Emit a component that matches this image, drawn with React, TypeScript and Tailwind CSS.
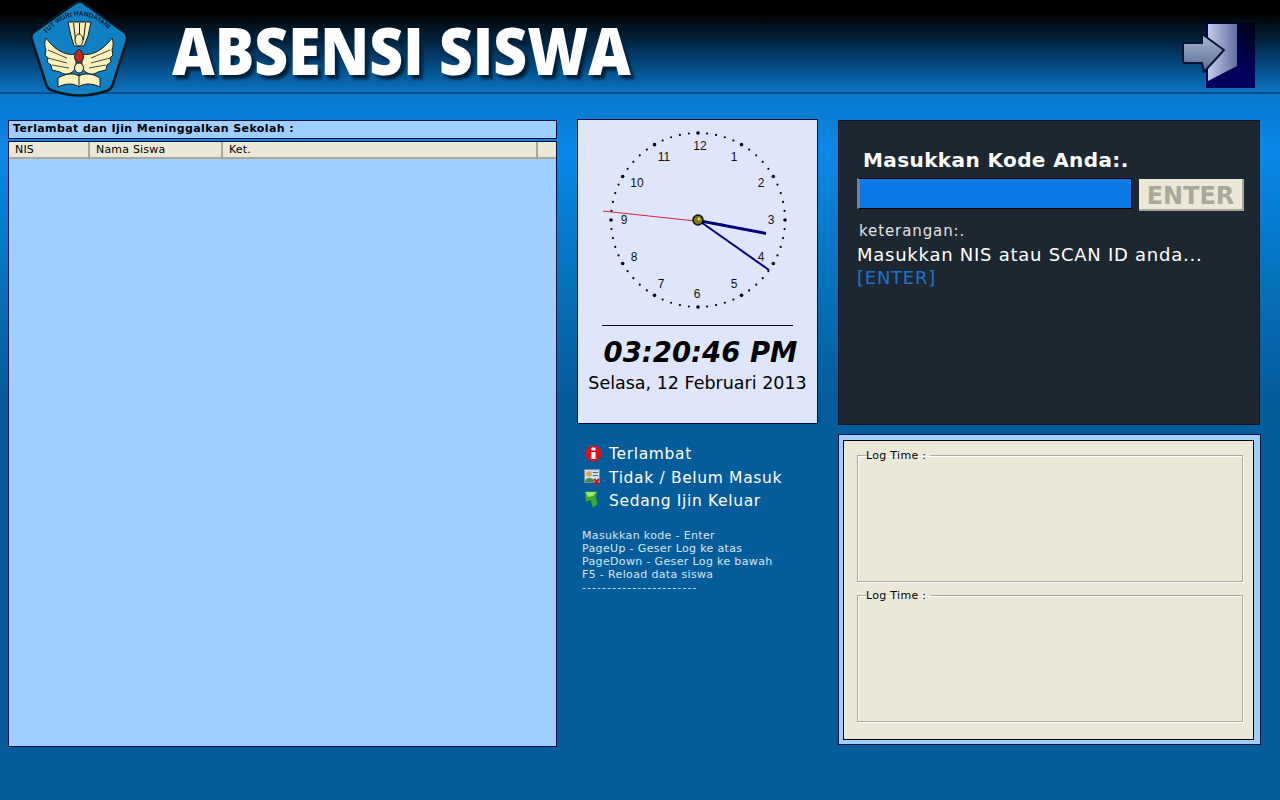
const verdana = "font-['DejaVu_Sans',sans-serif]";

function Logo() {
  return (
    <svg width="104" height="100" viewBox="28 0 104 100" className="absolute left-[28px] top-0">
      <defs>
        <path id="arc" d="M46 34 Q79 -3 113 34" fill="none" />
      </defs>
      <path d="M79 2 Q82 1 85 4 L124 32 Q128 35 127 40 L113 84 Q111 90 106 91 Q80 100 54 91 Q48 90 46 84 L32 40 Q30 35 34 32 L74 4 Q76 2 79 2Z" fill="#0f80c4" stroke="#10161c" strokeWidth="2.5" />
      <text fontSize="6.6" fontFamily="'Liberation Sans',sans-serif" fontWeight="700" fill="#0c2238"><textPath href="#arc" textLength="72">TUT WURI HANDAYANI</textPath></text>
      <path d="M68 22 L91 22 L88 36 L84 46 L74 46 L71 36Z" fill="#f8efb8" stroke="#1a1a1a" strokeWidth="1" />
      <path d="M73.5 23 L75.5 40 M79.5 23 L79.5 40 M85.5 23 L83.5 40" stroke="#1a1a1a" strokeWidth="1" />
      <path d="M46 38 C44 43 45 47 46 50 L45 55 L48 58 L47 62 L51 65 L52 70 L60 72 C66 76 72 74 76 68 L76 54 C68 56 56 52 46 38Z" fill="#fbf3bd" stroke="#1a1a1a" strokeWidth="1" />
      <path d="M112 38 C114 43 113 47 112 50 L113 55 L110 58 L111 62 L107 65 L106 70 L98 72 C92 76 86 74 82 68 L82 54 C90 56 102 52 112 38Z" fill="#fbf3bd" stroke="#1a1a1a" strokeWidth="1" />
      <path d="M48 50 L67 58 M48 58 L67 63 M52 65 L69 68 M110 50 L91 58 M110 58 L91 63 M106 65 L89 68" stroke="#1a1a1a" strokeWidth="0.8" />
      <ellipse cx="79" cy="40" rx="4" ry="6" fill="#f8efb8" stroke="#1a1a1a" />
      <path d="M79 49 C85 54 85 61 79 62.5 C73 61 73 54 79 49Z" fill="#c8281c" stroke="#1a1a1a" />
      <ellipse cx="79" cy="68" rx="4.5" ry="5" fill="#f8efb8" stroke="#1a1a1a" />
      <path d="M58 78 C66 73 74 73 79 76 C84 73 92 73 100 78 L100 87 C92 83 84 83 79 87 C74 83 66 83 58 87Z" fill="#fbf3bd" stroke="#1a1a1a" />
      <path d="M79 74 L79 87" stroke="#1a1a1a" />
    </svg>
  );
}

function ExitIcon() {
  return (
    <svg width="80" height="68" viewBox="1177 21 80 68" className="absolute left-[1177px] top-[21px]">
      <defs>
        <linearGradient id="room" x1="1" y1="0" x2="0.4" y2="1">
          <stop offset="0" stopColor="#000010" />
          <stop offset="0.6" stopColor="#03035c" />
          <stop offset="1" stopColor="#02025a" />
        </linearGradient>
        <linearGradient id="door" x1="0" y1="0" x2="1" y2="0">
          <stop offset="0" stopColor="#c2cdea" />
          <stop offset="1" stopColor="#5f6f9f" />
        </linearGradient>
        <linearGradient id="arrow" x1="0" y1="0" x2="0" y2="1">
          <stop offset="0" stopColor="#a9b8d6" />
          <stop offset="1" stopColor="#566a92" />
        </linearGradient>
      </defs>
      <rect x="1206" y="23" width="49" height="65" fill="url(#room)" />
      <path d="M1208 24 L1237 24 L1237 66 L1208 81Z" fill="url(#door)" />
      <path d="M1184 43 L1202 43 L1202 34 L1224 50 L1204 72 L1202 63 L1185 63 Q1183 63 1183 60 L1183 45 Q1183 43 1184 43Z" fill="url(#arrow)" stroke="#0a1430" strokeWidth="2" strokeLinejoin="round" />
    </svg>
  );
}

function Clock() {
  const cx = 120;
  const cy = 100;
  const dots = Array.from({ length: 60 }, (_, i) => {
    const a = (i * Math.PI) / 30;
    return { x: cx + 87 * Math.sin(a), y: cy - 87 * Math.cos(a), big: i % 5 === 0 };
  });
  const nums: [string, number, number][] = [
    ["12", 122, 26], ["1", 156, 37], ["2", 183, 63], ["3", 193, 100], ["4", 183, 137], ["5", 156, 164],
    ["6", 119, 174], ["7", 83, 164], ["8", 56, 137], ["9", 46, 100], ["10", 59, 63], ["11", 86, 37],
  ];
  return (
    <svg width="239" height="205" viewBox="0 0 239 205" className="block">
      {dots.map((d, i) => (
        <circle key={i} cx={d.x} cy={d.y} r={d.big ? 1.8 : 1.1} fill="#000" />
      ))}
      {nums.map(([t, x, y]) => (
        <text key={t} x={x} y={y + 4} textAnchor="middle" fontSize="12" fontFamily="'Liberation Sans',sans-serif" fill="#111">{t}</text>
      ))}
      <line x1="25" y1="91" x2="145" y2="104" stroke="#d8203c" strokeWidth="1" />
      <path d="M120 99 L188 112 L188 115 L120 102Z" fill="#000080" />
      <line x1="120" y1="100" x2="191" y2="150" stroke="#000080" strokeWidth="2" />
      <circle cx="120" cy="100" r="5" fill="#7a7a1a" stroke="#111" strokeWidth="1.5" />
      <circle cx="121" cy="99" r="1.5" fill="#e8d840" />
    </svg>
  );
}

function LegendRow({ icon, label, lift }: { icon: React.ReactNode; label: string; lift: string }) {
  return (
    <div className="flex h-[23.5px] items-center">
      <span className={`flex w-[32px] shrink-0 ${lift}`}>{icon}</span>
      <span className={`text-[15.5px] tracking-[0.65px] text-white ${verdana}`}>{label}</span>
    </div>
  );
}

function LogBox() {
  return (
    <fieldset className="h-[133px] border border-[#aca899] pl-[8px] shadow-[1px_1px_0_#ffffff,inset_1px_1px_0_#ffffff]">
      <legend className={`px-0 text-[11px] leading-[13px] tracking-[0.3px] text-black ${verdana}`}>Log Time :&nbsp;</legend>
    </fieldset>
  );
}

export default function App() {
  return (
    <div className="flex h-[800px] w-[1280px] flex-col overflow-hidden bg-[linear-gradient(180deg,#0a78cc_94px,#0a88e8_150px,#0672bc_280px,#055c9b_400px,#055c9b_800px)]">
      <header className="relative h-[94px] shrink-0 border-b-2 border-[#074f86] bg-[linear-gradient(180deg,#000000_0px,#000000_12px,#02233e_40px,#04508c_70px,#0a74c2_92px)]">
        <Logo />
        <h1 className="absolute left-[172px] top-[7px] origin-left scale-x-[0.89] font-['Open_Sans',sans-serif] text-[66px] leading-[84px] font-extrabold text-white [text-shadow:4px_4px_3px_#03203a]">
          ABSENSI SISWA
        </h1>
        <ExitIcon />
      </header>

      <main className="flex items-start pl-[8px] pt-[25px]">
        <section className={`mt-[1px] flex h-[627px] w-[549px] flex-col ${verdana}`}>
          <div className="flex h-[19px] items-center border border-[#00103a] bg-[#9fcfff] pl-[4px] text-[11px] font-bold tracking-[0.4px] text-black">
            Terlambat dan Ijin Meninggalkan Sekolah :
          </div>
          <div className="mt-[2px] flex-1 border border-[#00103a] bg-[#9fcfff]">
            <div className="flex h-[17px] border-b-2 border-[#aca899] bg-[#ebe8d8] text-[11px] leading-[16px] tracking-[0.2px] text-black">
              <div className="w-[81px] border-r-2 border-r-[#aca899] pl-[6px]">NIS</div>
              <div className="w-[133px] border-r-2 border-r-[#aca899] pl-[6px]">Nama Siswa</div>
              <div className="w-[315px] border-r-2 border-r-[#aca899] pl-[6px]">Ket.</div>
              <div className="flex-1" />
            </div>
          </div>
        </section>

        <section className="ml-[20px] w-[241px]">
          <div className={`h-[305px] border border-[#00103a] bg-[#dfe6fb] ${verdana}`}>
            <Clock />
            <div className="mx-[24px] h-px bg-black" />
            <div className="mt-[8px] pl-[6px] text-center text-[27.5px] leading-[36px] font-bold italic text-black">03:20:46 PM</div>
            <div className="mt-[1px] text-center text-[17.5px] leading-[24px] text-black">Selasa, 12 Februari 2013</div>
          </div>

          <div className="mt-[19px]">
            <LegendRow
              label="Terlambat"
              lift="mb-[3px] pl-[8px]"
              icon={
                <svg width="17" height="17" viewBox="0 0 17 17">
                  <circle cx="8.5" cy="8.5" r="8" fill="#d8141c" />
                  <rect x="6.5" y="7" width="4" height="7" fill="#fff" />
                  <rect x="6.5" y="2.5" width="4" height="3" rx="1" fill="#fff" />
                </svg>
              }
            />
            <LegendRow
              label="Tidak / Belum Masuk"
              lift="mb-[2px] pl-[7px]"
              icon={
                <svg width="16" height="16" viewBox="0 0 16 16">
                  <rect x="0.5" y="0.5" width="15" height="13" fill="#c9e0f2" stroke="#7b8a96" />
                  <rect x="9" y="3" width="5" height="1" fill="#55697a" />
                  <rect x="9" y="6" width="5" height="1" fill="#55697a" />
                  <circle cx="5" cy="5" r="2.8" fill="#e0a060" />
                  <path d="M1 13 C1 7.5 10 7.5 10 13Z" fill="#3e8a3e" />
                  <path d="M10 10 L15 15 M15 10 L10 15" stroke="#c81818" strokeWidth="2" />
                </svg>
              }
            />
            <LegendRow
              label="Sedang Ijin Keluar"
              lift="mb-[5px] pl-[7px]"
              icon={
                <svg width="14" height="17" viewBox="0 0 14 17">
                  <path d="M1 0.5 L13 0.5 L12 6 L13.5 13 L9 16.5 L6.5 9 L2 11 Z" fill="#3ea82a" />
                  <path d="M1.5 1 L12.5 1 L9 5 L4 6Z" fill="#9fe860" />
                </svg>
              }
            />
          </div>

          <div className={`mt-[15px] pl-[5px] text-[11px] leading-[13px] tracking-[0.35px] text-[#d6e8f6] ${verdana}`}>
            <p>Masukkan kode - Enter</p>
            <p>PageUp - Geser Log ke atas</p>
            <p>PageDown - Geser Log ke bawah</p>
            <p>F5 - Reload data siswa</p>
            <p className="tracking-[1.05px]">-----------------------</p>
          </div>
        </section>

        <section className={`ml-[20px] w-[423px] ${verdana}`}>
          <div className="mt-[1px] h-[305px] w-[422px] border border-[#0c141c] bg-[#1c2731] pl-[18px] pt-[26px]">
            <div className="pl-[6px] text-[20px] leading-[26px] font-bold tracking-[0.4px] text-white">Masukkan Kode Anda:.</div>
            <div className="mt-[5px] flex items-start">
              <input
                aria-label="Kode"
                className="h-[31px] w-[275px] border border-black border-l-[3px] border-l-[#6f8496] bg-[#0d78e8] outline-none"
              />
              <button className="mt-[1px] ml-[7px] h-[32px] w-[105px] border-r-2 border-b-2 border-[#aca899] bg-[#ebe8d8] pt-[3px] text-[24px] leading-[28px] font-bold text-[#aca899]">
                ENTER
              </button>
            </div>
            <div className="mt-[10px] pl-[2px] text-[15px] leading-[20px] tracking-[0.9px] text-[#e2e2e2]">keterangan:.</div>
            <div className="mt-[2px] text-[18px] leading-[23px] tracking-[0.75px] text-white">Masukkan NIS atau SCAN ID anda...</div>
            <div className="text-[18px] leading-[23px] tracking-[0.75px] text-[#1c74d0]">[ENTER]</div>
          </div>

          <div className="mt-[9px] h-[311px] border border-[#00103a] bg-[#9fcfff] pl-[4px] pr-[6px] pt-[5px]">
            <div className="flex h-[300px] flex-col gap-[7px] border border-black bg-[#ebe8d8] pl-[13px] pr-[10px] pt-[8px]">
              <LogBox />
              <LogBox />
            </div>
          </div>
        </section>
      </main>
    </div>
  );
}
